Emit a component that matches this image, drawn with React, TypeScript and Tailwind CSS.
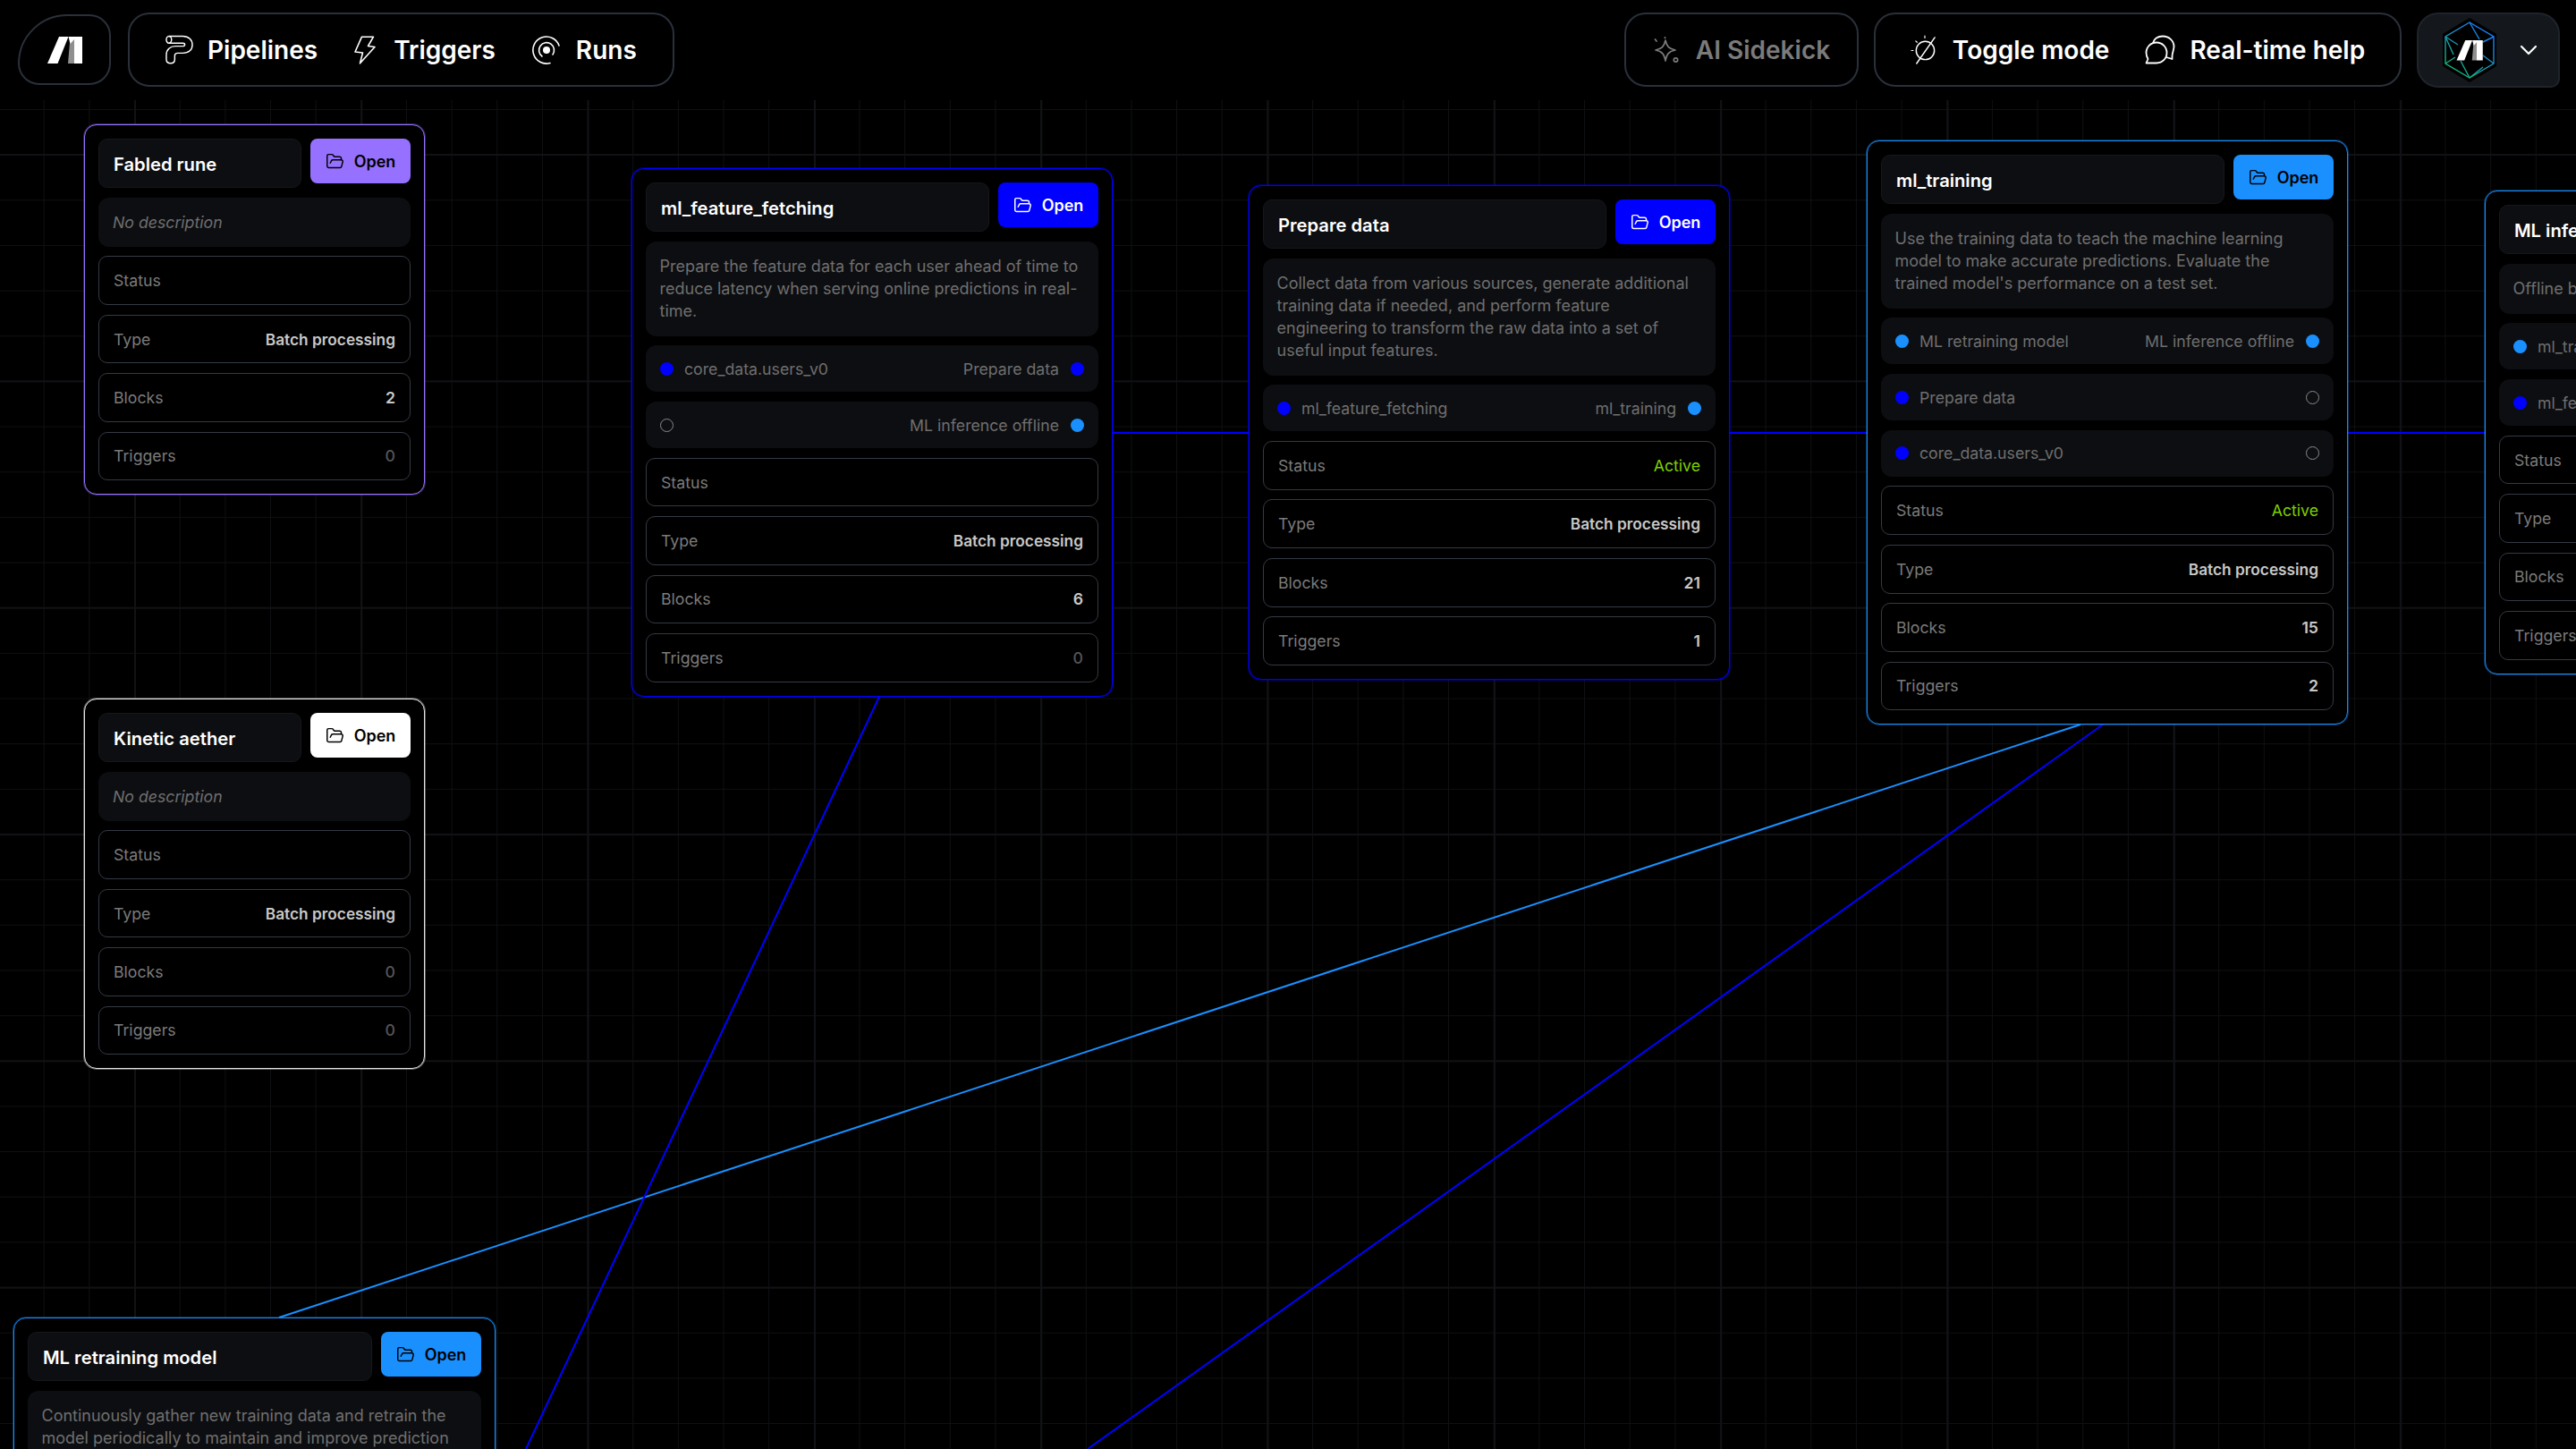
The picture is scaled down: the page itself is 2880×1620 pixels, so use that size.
import { FolderOpen, ChevronDown } from 'lucide-react'

type Port = { left?: string; right?: string; leftColor?: string; rightColor?: string }

type Node = {
  name: string
  pos: string
  border: string
  button: string
  description?: string
  ports?: Port[]
  status?: boolean
  blocks: string
  triggers: string
}

const BLUE = 'bg-[#0000ff]'
const SKY = 'bg-[#1a90ff]'

const NODES: Node[] = [
  {
    name: 'Fabled rune',
    pos: 'left-[94px] top-[139px] w-[381px]',
    border: 'border-[#9671ff] shadow-[0_0_0_1px_rgba(150,113,255,0.35)]',
    button: 'bg-[#9671ff] text-black',
    blocks: '2',
    triggers: '0',
  },
  {
    name: 'Kinetic aether',
    pos: 'left-[94px] top-[781px] w-[381px]',
    border: 'border-[#e4e4e4] shadow-[0_0_0_1px_rgba(255,255,255,0.35)]',
    button: 'bg-white text-black',
    blocks: '0',
    triggers: '0',
  },
  {
    name: 'ml_feature_fetching',
    pos: 'left-[706px] top-[188px] w-[538px]',
    border: 'border-[#0000ff] shadow-[0_0_0_1px_rgba(0,0,255,0.45)]',
    button: 'bg-[#0000ff] text-white',
    description: 'Prepare the feature data for each user ahead of time to reduce latency when serving online predictions in real-time.',
    ports: [
      { left: 'core_data.users_v0', leftColor: BLUE, right: 'Prepare data', rightColor: BLUE },
      { right: 'ML inference offline', rightColor: SKY },
    ],
    blocks: '6',
    triggers: '0',
  },
  {
    name: 'Prepare data',
    pos: 'left-[1396px] top-[207px] w-[538px]',
    border: 'border-[#0000ff] shadow-[0_0_0_1px_rgba(0,0,255,0.45)]',
    button: 'bg-[#0000ff] text-white',
    description: 'Collect data from various sources, generate additional training data if needed, and perform feature engineering to transform the raw data into a set of useful input features.',
    ports: [{ left: 'ml_feature_fetching', leftColor: BLUE, right: 'ml_training', rightColor: SKY }],
    status: true,
    blocks: '21',
    triggers: '1',
  },
  {
    name: 'ml_training',
    pos: 'left-[2087px] top-[157px] w-[538px]',
    border: 'border-[#1a8af0] shadow-[0_0_0_1px_rgba(26,144,255,0.35)]',
    button: 'bg-[#1a90ff] text-black',
    description: "Use the training data to teach the machine learning model to make accurate predictions. Evaluate the trained model's performance on a test set.",
    ports: [
      { left: 'ML retraining model', leftColor: SKY, right: 'ML inference offline', rightColor: SKY },
      { left: 'Prepare data', leftColor: BLUE },
      { left: 'core_data.users_v0', leftColor: BLUE },
    ],
    status: true,
    blocks: '15',
    triggers: '2',
  },
  {
    name: 'ML inference offline',
    pos: 'left-[2778px] top-[213px] w-[538px]',
    border: 'border-[#1a8af0] shadow-[0_0_0_1px_rgba(26,144,255,0.35)]',
    button: 'bg-[#1a90ff] text-black',
    description: 'Offline batch inference',
    ports: [
      { left: 'ml_training', leftColor: SKY },
      { left: 'ml_feature_fetching', leftColor: BLUE },
    ],
    blocks: '3',
    triggers: '0',
  },
  {
    name: 'ML retraining model',
    pos: 'left-[15px] top-[1473px] w-[539px]',
    border: 'border-[#1a8af0] shadow-[0_0_0_1px_rgba(26,144,255,0.35)]',
    button: 'bg-[#1a90ff] text-black',
    description: 'Continuously gather new training data and retrain the model periodically to maintain and improve prediction accuracy.',
    blocks: '4',
    triggers: '1',
  },
]

function LogoShape() {
  return (
    <>
      <polygon points="0,30 11.5,30 23.5,0 13,0" fill="#fff" />
      <polygon points="25,7 30,0 30,30 23,30" fill="#8f8f8f" />
      <polygon points="23.5,0 39,0 39,30 30,30 30,3 25.5,8" fill="#fff" />
    </>
  )
}

function PipelinesIcon() {
  return (
    <svg viewBox="0 0 32 34" className="h-[33px] w-[31px]" fill="none" stroke="#fff" strokeWidth="1.5">
      <path d="M4 1.5H20C27 1.5 31 6 31 11.5C31 17 27 21 20 21H14C12 21 10.7 22.2 10.7 24V28C10.7 31 8.7 32.7 6 32.7C3 32.7 1 30.7 1 28V23C1 17 5.5 13 11.5 13H20C21.4 13 22.3 12.3 22.3 11.2C22.3 10.1 21.4 9.5 20 9.5H4C2.2 9.5 1 7.5 1 5.5C1 3.5 2.2 1.5 4 1.5Z" />
      <path d="M4 1.5C5.8 1.5 7 3.5 7 5.5C7 7.5 5.8 9.5 4 9.5" />
    </svg>
  )
}

function TriggersIcon() {
  return (
    <svg viewBox="0 0 24 32" className="h-[32px] w-[24px]" fill="none" stroke="#fff" strokeWidth="1.6" strokeLinejoin="round">
      <path d="M8.5 1.2H21.5L15.5 11.5L23 12.5L6.5 30.8L9.5 19L1 18Z" />
    </svg>
  )
}

function RunsIcon() {
  return (
    <svg viewBox="0 0 32 32" className="h-[32px] w-[32px]" fill="none" stroke="#fff" strokeWidth="1.6" strokeLinecap="round">
      <path d="M30 11A15 15 0 1 0 20 30.5" />
      <path d="M11 23A8.5 8.5 0 1 1 23 21" />
      <circle cx="16" cy="16" r="4" fill="#fff" stroke="none" />
    </svg>
  )
}

function SidekickIcon() {
  return (
    <svg viewBox="0 0 30 30" className="h-[30px] w-[30px]" fill="none" stroke="#7b7b7b" strokeWidth="1.7" strokeLinecap="round">
      <path d="M14 4C15.5 11 18 13.5 25 15C18 16.5 15.5 19 14 27C12.5 19 10 16.5 3 15C10 13.5 12.5 11 14 4Z" strokeLinejoin="round" />
      <circle cx="25.5" cy="26" r="2.2" />
      <path d="M2.5 3L4 5M13.5 0.8V1.5" />
    </svg>
  )
}

function ToggleIcon() {
  return (
    <svg viewBox="0 0 32 34" className="h-[33px] w-[31px]" fill="none" stroke="#fff" strokeWidth="1.5" strokeLinecap="round">
      <circle cx="17" cy="18" r="10.5" />
      <path d="M28 3L7 33" />
      <path d="M16.5 1V3.5M1 18H3M6 7L7.5 8.5" strokeWidth="1.2" />
    </svg>
  )
}

function HelpIcon() {
  return (
    <svg viewBox="0 0 34 33" className="h-[33px] w-[34px]" fill="none" stroke="#fff" strokeWidth="1.8" strokeLinejoin="round">
      <path d="M13 8.5C6.5 8.5 1.5 13.5 1.5 20C1.5 23 2.3 25 3.5 27L1.5 31.5H13C19.5 31.5 24.5 26.5 24.5 20C24.5 13.5 19.5 8.5 13 8.5Z" />
      <path d="M9 9C10 4.5 14.5 1.5 20 1.5C27 1.5 32.5 6.5 32.5 13C32.5 17 30.5 20 30.5 24V27L24 25" />
    </svg>
  )
}

function ProfileHex() {
  return (
    <svg viewBox="0 0 60 72" className="h-[72px] w-[60px]">
      <defs>
        <linearGradient id="hexStroke" x1="0.8" y1="0.1" x2="0.25" y2="0.9">
          <stop offset="0" stopColor="#1a7fff" />
          <stop offset="0.45" stopColor="#1a8fc0" />
          <stop offset="1" stopColor="#10b77f" />
        </linearGradient>
      </defs>
      <polygon points="30,0 60,18 60,54 30,72 0,54 0,18" fill="#000" />
      <g fill="none" stroke="url(#hexStroke)" strokeWidth="1.4">
        <polygon points="30,5 57,21 57,51 30,67 3,51 3,21" />
        <path d="M30 5L41 24M57 21L45 27M57 51L45 42M30 67L20 48M3 51L14 44M3 21L17 30M3 21L12 41M30 67L45 55" />
      </g>
      <g transform="translate(15.5 25) scale(0.75)">
        <LogoShape />
      </g>
    </svg>
  )
}

function Dot({ color }: { color?: string }) {
  if (color) return <span className={`h-[15px] w-[15px] shrink-0 rounded-full ${color}`} />
  return <span className="h-[15px] w-[15px] shrink-0 rounded-full border border-[#8a8a8a]" />
}

function StatRow({ label, value, valueClass }: { label: string; value?: string; valueClass?: string }) {
  return (
    <div className="flex h-[54.7px] items-center justify-between rounded-[10px] border border-[#343a44] px-[16px] text-[#7b7b7b]">
      <span>{label}</span>
      {value && <span className={valueClass}>{value}</span>}
    </div>
  )
}

function countClass(v: string) {
  return v === '0' ? 'font-medium text-[#555]' : 'font-semibold text-[#c8c8c8]'
}

function PipelineNode({ node }: { node: Node }) {
  return (
    <div className={`absolute z-10 flex flex-col gap-[10.7px] rounded-[14px] border bg-black p-[15px] text-[17.7px] leading-[25px] ${node.pos} ${node.border}`}>
      <div className="flex items-start gap-[10px]">
        <div className="flex h-[55px] flex-1 items-center rounded-[10px] border border-[#15171b] bg-[#0d0e11] px-[16px] pt-[1px] text-[20.2px] font-semibold text-white">
          {node.name}
        </div>
        <div className={`flex h-[50px] w-[112px] shrink-0 items-center justify-center gap-[11px] rounded-[8px] text-[18px] font-semibold ${node.button}`}>
          <FolderOpen size={21} strokeWidth={1.7} />
          Open
        </div>
      </div>

      {node.description ? (
        <div className="rounded-[12px] bg-[#0d0e11] px-[15.5px] py-[15.5px] text-[18px] text-[#6f6f6f]">{node.description}</div>
      ) : (
        <div className="flex h-[55px] items-center rounded-[12px] bg-[#0d0e11] px-[16px] italic text-[#6f6f6f]">No description</div>
      )}

      {node.ports?.map((p, i) => (
        <div key={i} className="flex h-[52px] items-center justify-between rounded-[12px] bg-[#0d0e11] px-[16px] text-[#6f6f6f]">
          <div className="flex items-center gap-[12px]">
            <Dot color={p.leftColor} />
            {p.left && <span>{p.left}</span>}
          </div>
          <div className="flex items-center gap-[13px]">
            {p.right && <span>{p.right}</span>}
            <Dot color={p.rightColor} />
          </div>
        </div>
      ))}

      <StatRow label="Status" value={node.status ? 'Active' : undefined} valueClass="text-[#7ed000]" />
      <StatRow label="Type" value="Batch processing" valueClass="text-[17.3px] font-semibold text-[#c8c8c8]" />
      <StatRow label="Blocks" value={node.blocks} valueClass={countClass(node.blocks)} />
      <StatRow label="Triggers" value={node.triggers} valueClass={countClass(node.triggers)} />
    </div>
  )
}

export default function App() {
  return (
    <div className="relative h-[1620px] w-[2880px] overflow-hidden bg-black font-[Inter,sans-serif]">
      {/* canvas grid */}
      <div className="absolute inset-x-0 bottom-0 top-[112px] bg-[linear-gradient(to_right,#111215_2px,transparent_2px),linear-gradient(to_bottom,#111215_2px,transparent_2px),linear-gradient(to_right,#0f1012_1px,transparent_1px),linear-gradient(to_bottom,#0f1012_1px,transparent_1px)] bg-[size:253.33px_253.33px,253.33px_253.33px,50.67px_50.67px,50.67px_50.67px] bg-[position:150px_0,0_60px,48.7px_0,0_10px]" />

      {/* edges between nodes */}
      <svg className="absolute inset-0" width="2880" height="1620" fill="none" strokeWidth="2">
        <path d="M1244 484H1396M1934 484H2087M2625 484H2778" stroke="#0000ff" />
        <path d="M312 1473L2326 810" stroke="#1a90ff" />
        <path d="M983 779L588 1620" stroke="#0000ff" />
        <path d="M2351 810L1216 1620" stroke="#0000ff" />
      </svg>

      {NODES.map(n => (
        <PipelineNode key={n.name} node={n} />
      ))}

      <header className="absolute inset-x-0 top-0 flex items-start justify-between pl-[20px] pr-[18px] pt-[14px] text-[28px] font-semibold text-white">
        <div className="flex gap-[19px]">
          <div className="mt-[2px] flex h-[79px] w-[104px] items-center justify-center rounded-[26px] rounded-tl-[60px] border-2 border-[#2a303a]">
            <svg viewBox="0 0 39 30" className="h-[30px] w-[39px]">
              <LogoShape />
            </svg>
          </div>
          <nav className="flex h-[83px] items-center gap-[41px] rounded-[24px] border-2 border-[#2a303a] px-[40px]">
            <span className="flex items-center gap-[16px]"><PipelinesIcon />Pipelines</span>
            <span className="flex items-center gap-[20px]"><TriggersIcon />Triggers</span>
            <span className="flex items-center gap-[17px]"><RunsIcon />Runs</span>
          </nav>
        </div>

        <div className="flex gap-[17px]">
          <div className="flex h-[83px] w-[262px] items-center justify-center gap-[18px] rounded-[24px] border-2 border-[#2a303a] text-[#7b7b7b]">
            <SidekickIcon />AI Sidekick
          </div>
          <div className="flex h-[83px] w-[590px] items-center justify-center gap-[40px] rounded-[24px] border-2 border-[#2a303a]">
            <span className="flex items-center gap-[16px]"><ToggleIcon />Toggle mode</span>
            <span className="flex items-center gap-[16px]"><HelpIcon />Real-time help</span>
          </div>
          <div className="flex h-[84px] w-[160px] items-center gap-[20px] rounded-[24px] rounded-br-[10px] border-2 border-[#1f242b] bg-[#14171c] pl-[27px]">
            <ProfileHex />
            <ChevronDown size={32} strokeWidth={1.6} />
          </div>
        </div>
      </header>
    </div>
  )
}
